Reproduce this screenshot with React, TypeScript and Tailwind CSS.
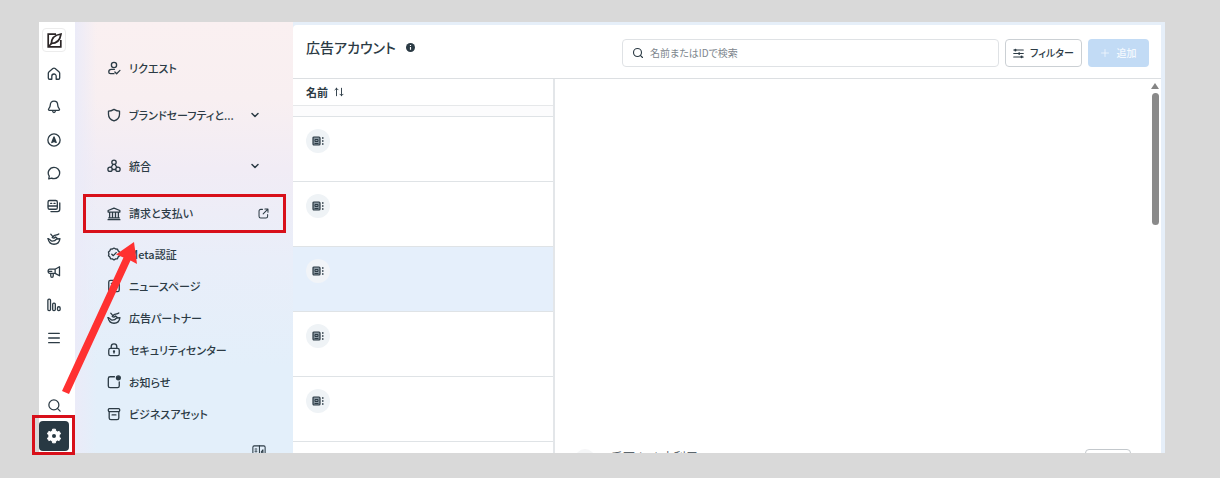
import type { ReactNode } from "react";
import { ChevronDown, Menu, Search } from "lucide-react";

type IconProps = {
  size?: number;
  children: ReactNode;
};

type NavItem = {
  label: string;
  icon: ReactNode;
};

function Icon({ size = 14, children }: IconProps) {
  return (
    <svg
      width={size}
      height={size}
      viewBox="0 0 16 16"
      fill="none"
      stroke="currentColor"
      strokeWidth="1.5"
      strokeLinecap="round"
      strokeLinejoin="round"
      className="shrink-0"
      aria-hidden="true"
    >
      {children}
    </svg>
  );
}

const partnerShape = (
  <>
    <path d="M1.2 7.500c.8 4.200 3.300 6.500 6.800 6.500 3.700 0 6.200-2.200 6.800-6.500l-2.300.3" />
    <path d="M1.200 7.500c2.300 0 2.500 3 4.800 3 1.800 0 3.800-.8 5-2.500" />
    <path d="M13.500 2.200c-1.500 1.300-3.500 1.300-5.500 2L6 6.300c1.300 1 2.800.6 3.800-.6L12.500 8M4.300 2.500l1.700 2" />
  </>
);

const railItems: NavItem[] = [
  {
    label: "ホーム",
    icon: (
      <Icon>
        <path d="M1.500 7.200c0-.8.3-1.400.9-1.900l4.300-3.500c.8-.6 1.800-.6 2.600 0l4.300 3.500c.6.5.9 1.100.9 1.900v5.300c0 .9-.6 1.500-1.500 1.500h-2.500V10.500a2.500 2.500 0 0 0-5 0V14H3c-.9 0-1.500-.6-1.500-1.500z" />
      </Icon>
    ),
  },
  {
    label: "お知らせ",
    icon: (
      <Icon>
        <path d="M8 1.200c-2.600 0-4.200 1.900-4.200 4.300 0 2.300-.7 3.200-1.700 4.300-.8.900-.4 2 .8 2h10.200c1.200 0 1.600-1.100.8-2-1-1.100-1.700-2-1.700-4.300 0-2.400-1.600-4.300-4.200-4.300z" />
        <path d="M6.300 12.300c.2 1.300.8 2 1.700 2s1.500-.7 1.700-2" />
      </Icon>
    ),
  },
  {
    label: "広告マネージャ",
    icon: (
      <Icon>
        <circle cx="8" cy="8" r="7" />
        <path d="M8 4.500 10.500 10.800 8 9.500 5.500 10.800z" fill="currentColor" />
      </Icon>
    ),
  },
  {
    label: "メッセージ",
    icon: (
      <Icon>
        <path d="M8 1.500A6.500 6.500 0 0 1 14.500 8 6.500 6.500 0 0 1 8 14.500c-1 0-2-.2-2.800-.6L2 14.600l.6-2.900A6.500 6.500 0 0 1 8 1.500z" />
      </Icon>
    ),
  },
  {
    label: "コンテンツ",
    icon: (
      <Icon>
        <rect x="1.200" y="1.700" width="10.600" height="10" rx="1.800" />
        <path d="M1.500 8h10M4.200 5h1.200M8 5h1.200" />
        <path d="M14.600 4.500v7.200a2.700 2.700 0 0 1-2.700 2.700H4.500" />
      </Icon>
    ),
  },
  { label: "パートナー", icon: <Icon>{partnerShape}</Icon> },
  {
    label: "広告",
    icon: (
      <Icon>
        <path d="M14.300 2v10.300L9.300 9.500H3A1.700 1.700 0 0 1 1.300 7.800V6.500A1.700 1.700 0 0 1 3 4.800h6.300zM9.300 4.800v4.700M4.300 9.700v3c0 1 .6 1.500 1.400 1.500s1.400-.5 1.400-1.500v-3M1.500 7.200h4" />
      </Icon>
    ),
  },
  {
    label: "インサイト",
    icon: (
      <Icon>
        <rect x="1" y="1.200" width="3" height="13.300" rx="1.300" />
        <rect x="6.500" y="5.800" width="3" height="8.700" rx="1.300" />
        <rect x="12" y="10" width="3" height="4.500" rx="1.300" />
      </Icon>
    ),
  },
  { label: "すべてのツール", icon: <Menu size={16} strokeWidth={2} aria-hidden="true" /> },
];

const menuItems: NavItem[] = [
  {
    label: "Meta認証",
    icon: (
      <Icon>
        <path d="M8 1.200 9.800 2.300l2.100.1.800 2 1.600 1.400L13.800 8l.5 2.100-1.600 1.400-.8 2-2.100.1L8 14.800l-1.800-1.200-2.100-.1-.8-2-1.600-1.400L2.200 8l-.5-2.200 1.600-1.400.8-2 2.100-.1z" />
        <path d="m5.500 8.200 1.700 1.700 3.300-3.500" />
      </Icon>
    ),
  },
  {
    label: "ニュースページ",
    icon: (
      <Icon>
        <rect x="2" y="1.500" width="12" height="13" rx="2" />
        <path d="M5 5h6M5 8h4" />
      </Icon>
    ),
  },
  { label: "広告パートナー", icon: <Icon>{partnerShape}</Icon> },
  {
    label: "セキュリティセンター",
    icon: (
      <Icon>
        <rect x="2" y="6.200" width="12" height="8.300" rx="2" />
        <path d="M4.800 6V4.200a3.200 3.200 0 0 1 6.400 0V6M8 9.500v2" />
        <circle cx="8" cy="9.500" r=".6" fill="currentColor" />
      </Icon>
    ),
  },
  {
    label: "お知らせ",
    icon: (
      <Icon>
        <path d="M8.500 2H3.500C2.400 2 1.500 2.900 1.500 4v8.500c0 1.100.9 2 2 2H12c1.100 0 2-.9 2-2V8" />
        <circle cx="13" cy="3.200" r="2.200" fill="currentColor" />
      </Icon>
    ),
  },
  {
    label: "ビジネスアセット",
    icon: (
      <Icon>
        <rect x="1.500" y="1.800" width="13" height="3.500" rx="1.200" />
        <path d="M2.500 5.500v7c0 1.100.9 2 2 2h7c1.100 0 2-.9 2-2v-7M5.800 9h4.400" />
      </Icon>
    ),
  },
];

const accounts = [
  { id: 1, selected: false },
  { id: 2, selected: false },
  { id: 3, selected: true },
  { id: 4, selected: false },
  { id: 5, selected: false },
];

function Rail() {
  return (
    <nav aria-label="ツール" className="flex w-9 shrink-0 flex-col bg-white pb-0.5 pt-1.5">
      <a
        href="#home"
        aria-label="Business Suite"
        className="mb-[5px] ml-[3px] flex size-6 shrink-0 items-center justify-center rounded-sm border border-[#ececec] text-[#2b2526]"
      >
        <svg width="15" height="15" viewBox="0 0 15 15" fill="none" stroke="currentColor" className="shrink-0" aria-hidden="true">
          <path d="M9 1.200H1.200v12.600h12.600V7" strokeWidth="1.700" />
          <path d="M14 1C8.500 1.800 4.500 4.500 4.300 10.500 10 10.500 13 7.500 14 1z" strokeWidth="1.700" />
          <path d="M1.500 13.500 5 10" strokeWidth="1.700" />
        </svg>
      </a>
      {railItems.map((item) => (
        <a
          key={item.label}
          href="#tool"
          aria-label={item.label}
          className="flex h-[33px] w-[30px] shrink-0 items-center justify-center"
        >
          {item.icon}
        </a>
      ))}
      <button type="button" aria-label="検索" className="mt-auto flex h-8 w-[30px] items-center justify-center">
        <Search size={15} strokeWidth={2} aria-hidden="true" />
      </button>
      <button
        type="button"
        aria-label="設定"
        className="relative flex size-[30px] shrink-0 items-center justify-center rounded bg-[#283943] text-white"
      >
        <svg width="16" height="16" viewBox="0 0 16 16" aria-hidden="true">
          <path
            d="M6.600 1.200h2.800l.5 2 1.300.8 2-.6 1.400 2.400-1.500 1.400v1.600l1.500 1.400-1.400 2.400-2-.6-1.300.8-.5 2H6.600l-.5-2-1.300-.8-2 .6-1.400-2.400 1.500-1.400V7.200L1.400 5.800l1.400-2.400 2 .6 1.300-.8z"
            fill="currentColor"
            stroke="currentColor"
            strokeLinejoin="round"
          />
          <circle cx="8" cy="8" r="2" fill="#283943" />
        </svg>
        <span className="absolute -bottom-1 -left-[7px] -right-1.5 -top-1.5 border-3 border-[#d8101a]" />
      </button>
    </nav>
  );
}

function Sidebar() {
  const row = "flex h-8 shrink-0 items-center gap-2 pl-8 pr-6";

  return (
    <nav
      aria-label="設定"
      className="flex w-[218px] shrink-0 flex-col overflow-hidden whitespace-nowrap bg-[linear-gradient(90deg,#ebebf8_0%,transparent_10%),linear-gradient(180deg,#faf0f1_0%,#f8eff1_18%,#f1ecf5_34%,#e9eef9_55%,#e3effa_80%)] pt-[30px] text-[11px] font-medium"
    >
      <a href="#requests" className={row}>
        <Icon>
          <circle cx="8" cy="4.500" r="3" />
          <path d="M8.500 9.500H5a3 3 0 0 0-3 3c0 1.200.7 2 2 2h4M9 12.500l2 2 3.800-3.800" />
        </Icon>
        リクエスト
      </a>
      <button type="button" className={`${row} mt-[15px]`}>
        <Icon>
          <path d="M1.700 3.500C4 3.500 6 2.700 8 1.500c2 1.200 4 2 6.300 2V7c0 3.700-2.300 6.300-6.300 7.800C4 13.300 1.700 10.700 1.700 7z" />
        </Icon>
        ブランドセーフティと...
        <ChevronDown size={12} strokeWidth={3} className="ml-auto mr-2 shrink-0" aria-hidden="true" />
      </button>
      <button type="button" className={`${row} mt-[19px]`}>
        <Icon>
          <circle cx="8" cy="3.700" r="2.500" />
          <circle cx="3.500" cy="11.700" r="2.500" />
          <circle cx="12.500" cy="11.700" r="2.500" />
          <path d="M7 6.200 4.800 9.300M9 6.200l2.200 3.100M6.200 12h3.600" />
        </Icon>
        統合
        <ChevronDown size={12} strokeWidth={3} className="ml-auto mr-2 shrink-0" aria-hidden="true" />
      </button>
      <a
        href="#billing"
        className="ml-2 mr-[7px] mt-3 flex h-[39px] shrink-0 items-center gap-2 border-3 border-[#d8101a] pl-[21px] pr-[14px]"
      >
        <Icon>
          <path d="M8 1.200 1.300 4v1.800h13.400V4zM1.200 14.500h13.600M2 12.500h12M3 6v6.500M6.300 6v6.500M9.700 6v6.500M13 6v6.500" />
        </Icon>
        請求と支払い
        <span className="ml-auto">
          <Icon size={11}>
            <path d="M6.500 2H4a2.500 2.500 0 0 0-2.500 2.500V12A2.500 2.500 0 0 0 4 14.500h7.500A2.500 2.500 0 0 0 14 12V9.500M10 1.500h4.500V6M14 2 7.500 8.500" />
          </Icon>
        </span>
      </a>
      <ul className="mt-[5px]">
        {menuItems.map((item) => (
          <li key={item.label}>
            <a href="#item" className={row}>
              {item.icon}
              {item.label}
            </a>
          </li>
        ))}
      </ul>
      <button type="button" aria-label="メニューを折りたたむ" className="ml-auto mr-[27px] mt-auto h-2 shrink-0 overflow-hidden">
        <Icon>
          <rect x="1" y="1" width="14" height="13" rx="1.500" strokeWidth="1.200" />
          <path d="M8.500 1v13M3.500 4.500h2M3.500 7h2M3.500 9.500h2M12.500 5.500 10.500 8l2 2.500z" strokeWidth="1.200" />
        </Icon>
      </button>
    </nav>
  );
}

function AccountTable() {
  return (
    <div className="w-[262px] shrink-0 overflow-hidden border-r-2 border-[#e3e6e9]">
      <table className="w-full border-separate border-spacing-0">
        <thead>
          <tr>
            <th scope="col" className="h-[27px] border-b border-[#e6e8ea] p-0 pl-[13px] text-left text-[11px] font-bold">
              <span className="flex items-center gap-1.5">
                名前
                <Icon size={10}>
                  <path d="M4 14V2M1.500 4.500 4 2l2.500 2.500M12 2v12M9.500 11.500 12 14l2.500-2.500" />
                </Icon>
              </span>
            </th>
          </tr>
        </thead>
        <tbody>
          <tr>
            <td className="h-[11px] border-b border-[#dfe3e6] bg-[#fcfcfd] p-0" />
          </tr>
          {accounts.map((account) => (
            <tr key={account.id} className={account.selected ? "bg-[#e5effb]" : "bg-white"}>
              <td className="h-[65px] border-b border-[#dfe3e6] p-0 pl-[13px] pt-3 align-top">
                <span
                  className={`flex size-6 items-center justify-center rounded-full ${account.selected ? "bg-[#f1f4f8]" : "bg-[#eff3f6]"}`}
                >
                  <svg width="12" height="12" viewBox="0 0 12 12" fill="none" stroke="currentColor" aria-hidden="true">
                    <rect x="1" y="2" width="7" height="8" rx="1" fill="#8b99a3" strokeWidth="1.200" />
                    <path d="M3 4.500h3v2H3zM2.500 8.500h4" />
                    <path d="M10 3h1.500M10 6h1.500M10 9h1.500" strokeWidth="1.300" />
                  </svg>
                </span>
              </td>
            </tr>
          ))}
        </tbody>
      </table>
    </div>
  );
}

export default function App() {
  return (
    <div className="flex h-screen flex-col overflow-hidden bg-[#d9d9d9] pb-[25px] pl-[39px] pr-[55px] pt-[22px] font-['Noto_Sans_CJK_JP','Noto_Sans',sans-serif] text-xs text-[#2c3b45] [font-feature-settings:'palt']">
      <div className="relative flex min-h-0 flex-1 bg-[#e6eff9]">
        <Rail />
        <Sidebar />

        <main className="mr-1 mt-[3px] flex min-w-0 flex-1 flex-col overflow-hidden rounded-tl bg-white">
          <header className="flex shrink-0 items-start gap-1.5 border-b border-[#dcdfe2] pb-[11px] pl-[13px] pr-3 pt-3.5">
            <div className="flex w-[310px] shrink-0 items-center gap-2.5">
              <h1 className="text-sm font-medium leading-4">広告アカウント</h1>
              <svg width="9" height="9" viewBox="0 0 10 10" aria-hidden="true">
                <circle cx="5" cy="5" r="5" fill="currentColor" />
                <path d="M5 4.500v3M5 2.300v1" stroke="#fff" strokeWidth="1.300" />
              </svg>
            </div>
            <label className="flex h-7 min-w-0 flex-1 items-center gap-1.5 rounded border border-[#dfe2e5] pl-[9px]">
              <Search size={12} strokeWidth={2.300} className="shrink-0" aria-hidden="true" />
              <input
                type="text"
                aria-label="名前またはIDで検索"
                placeholder="名前またはIDで検索"
                className="w-full min-w-0 bg-transparent text-[10px] outline-none placeholder:text-[#7d868d]"
              />
            </label>
            <button
              type="button"
              className="flex h-7 w-[77px] shrink-0 items-center justify-center gap-1.5 rounded border border-[#cbd0d4] text-[10px] font-medium"
            >
              <Icon size={11}>
                <path d="M1 3h14M1 8h14M1 13h14" />
                <path d="M3.500 2.500v1M9 7.500v1M12.500 12.500v1" strokeWidth="3" />
              </Icon>
              フィルター
            </button>
            <button
              type="button"
              disabled
              className="flex h-7 w-[61px] shrink-0 items-center justify-center gap-2 rounded bg-[#c2dbf5] text-[10px] font-medium text-[#f4f9fe]"
            >
              <Icon size={8}>
                <path d="M8 1v14M1 8h14" />
              </Icon>
              追加
            </button>
          </header>

          <div className="flex min-h-0 flex-1">
            <AccountTable />
            <section className="flex min-w-0 flex-1 flex-col justify-end">
              <div className="flex h-1 shrink-0 items-start overflow-hidden pl-5 pr-[18px]">
                <span className="size-5 shrink-0 rounded-full bg-[#f5f6f7]" />
                <span className="ml-4 leading-4 text-[#5c666d]">千万 (24) 未利用</span>
                <button
                  type="button"
                  aria-label="編集"
                  className="ml-auto h-6 w-[46px] shrink-0 rounded border border-[#c3c8cc]"
                />
              </div>
            </section>
            <div className="flex w-3 shrink-0 flex-col items-center gap-1 pt-1" aria-hidden="true">
              <svg width="8" height="6" viewBox="0 0 8 6">
                <path d="M4 0 8 6H0z" fill="#858585" />
              </svg>
              <div className="h-[132px] w-[7px] rounded-full bg-[#8a8a8a]" />
            </div>
          </div>
        </main>

        <svg
          className="pointer-events-none absolute left-[23px] top-[220px] h-40 w-20"
          viewBox="62 242 80 160"
          aria-hidden="true"
        >
          <path d="M62 391 123.500 257.500 116 254.500 134 242 137 264 130.500 260.500 69 394z" fill="#ff3131" />
        </svg>
      </div>
    </div>
  );
}
